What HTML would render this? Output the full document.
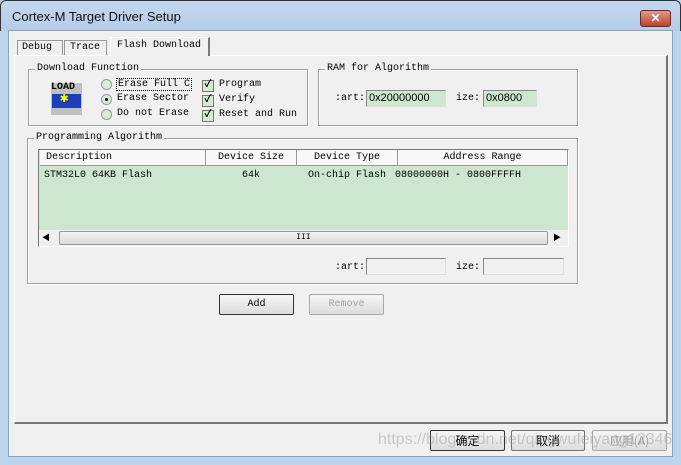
<!DOCTYPE html><html><head><meta charset="utf-8"><style>
*{margin:0;padding:0;box-sizing:border-box}
body{width:681px;height:465px;background:#bcd5ec;position:relative;overflow:hidden;font-family:"Liberation Mono","Noto Sans CJK SC",monospace;font-size:10px;color:#000}
.a{position:absolute}
.title{left:0;top:0;width:681px;height:31px;background:linear-gradient(#c4d8ee,#b4cde8);border:1px solid #333;border-bottom:none;border-radius:6px 6px 0 0}
.client{left:8px;top:30px;width:665px;height:427px;background:#f0f0f0;border:1px solid #8aa3bf}
.grp{position:absolute;border:1px solid #a0a0a0;box-shadow:1px 1px 0 #fff inset,1px 1px 0 #fff}
.grp .t{position:absolute;top:-7px;left:6px;background:#f0f0f0;padding:0 2px;line-height:12px}
.in{position:absolute;height:17px;border:1px solid #888;border-right-color:#ddd;border-bottom-color:#ddd;padding-left:2px;line-height:14px;font-family:"Liberation Sans",sans-serif;font-size:11px}
.btn{position:absolute;height:21px;border:1px solid #707070;background:linear-gradient(#f6f6f6,#dcdcdc);text-align:center;line-height:19px;border-radius:2px}
.rad{position:absolute;width:11px;height:11px;border-radius:50%;border:1px solid #999;background:#d9ecd9}
.chk{position:absolute;width:12px;height:12px;border:1px solid #777;background:#d4ead4;font-size:10px;line-height:10px;text-align:center;font-weight:bold}
.th{position:absolute;top:0;height:16px;border-right:1px solid #999;border-bottom:1px solid #999;background:#f8f8f8;line-height:15px}
</style></head><body>
<div class="a title"></div>
<div class="a" style="left:12px;top:9px;font:13px 'Liberation Sans',sans-serif;color:#111">Cortex-M Target Driver Setup</div>
<div class="a" style="left:640px;top:10px;width:31px;height:17px;background:linear-gradient(#e09a8a,#c0412c);border:1px solid #6b2a20;border-radius:3px;color:#fff;font:bold 12px 'Liberation Sans';text-align:center;line-height:15px">✕</div>
<div class="a client"></div>
<!-- tabs -->
<div class="a" style="left:17px;top:40px;width:46px;height:16px;border:1px solid #999;border-bottom:none;background:#f0f0f0;line-height:14px;padding-left:4px">Debug</div>
<div class="a" style="left:64px;top:40px;width:43px;height:16px;border:1px solid #999;border-bottom:none;background:#f0f0f0;line-height:14px;padding-left:5px">Trace</div>
<div class="a" style="left:14px;top:55px;width:654px;height:369px;border:1px solid #fff;border-right:2px solid #777;border-bottom:2px solid #777;box-shadow:0 0 0 0 #fff"></div>
<div class="a" style="left:110px;top:37px;width:100px;height:19px;border:1px solid #fff;border-right:2px solid #777;border-bottom:none;background:#f0f0f0;line-height:15px;padding-left:6px">Flash Download</div>
<!-- Download function -->
<div class="grp" style="left:28px;top:69px;width:280px;height:57px"><span class="t">Download Function</span></div>
<div class="a" style="left:51px;top:83px;width:31px;height:32px;background:#c0c0c0"></div>
<div class="a" style="left:51px;top:82px;font:bold 10px 'Liberation Mono';letter-spacing:0">LOAD</div>
<div class="a" style="left:52px;top:94px;width:29px;height:14px;background:#1d3fb5"></div>
<div class="a" style="left:60px;top:92px;color:#ff0;font-size:14px;line-height:14px">✱</div>
<div class="rad" style="left:101px;top:79px"></div>
<div class="rad" style="left:101px;top:94px"><div style="width:3px;height:3px;background:#000;border-radius:50%;margin:3px"></div></div>
<div class="rad" style="left:101px;top:109px"></div>
<div class="a" style="left:116px;top:78px;border:1px dotted #000;padding:0 1px;line-height:11px">Erase Full C</div>
<div class="a" style="left:117px;top:93px">Erase Sector</div>
<div class="a" style="left:117px;top:108px">Do not Erase</div>
<div class="chk" style="left:202px;top:80px">✓</div>
<div class="chk" style="left:202px;top:95px">✓</div>
<div class="chk" style="left:202px;top:110px">✓</div>
<div class="a" style="left:219px;top:79px">Program</div>
<div class="a" style="left:219px;top:94px">Verify</div>
<div class="a" style="left:219px;top:109px">Reset and Run</div>
<!-- RAM -->
<div class="grp" style="left:318px;top:69px;width:260px;height:57px"><span class="t">RAM for Algorithm</span></div>
<div class="a" style="left:335px;top:93px">:art:</div>
<div class="in" style="left:366px;top:90px;width:80px;background:#cde8cf">0x20000000</div>
<div class="a" style="left:456px;top:93px">ize:</div>
<div class="in" style="left:483px;top:90px;width:54px;background:#cde8cf">0x0800</div>
<!-- Programming algorithm -->
<div class="grp" style="left:27px;top:138px;width:551px;height:146px"><span class="t">Programming Algorithm</span></div>
<div class="a" style="left:38px;top:149px;width:531px;height:98px;border:1px solid #777;border-right-color:#fff;border-bottom-color:#fff;background:#cce6cf;overflow:hidden">
<div class="th" style="left:1px;width:166px;padding-left:6px">Description</div>
<div class="th" style="left:167px;width:91px;text-align:center">Device Size</div>
<div class="th" style="left:258px;width:101px;text-align:center">Device Type</div>
<div class="th" style="left:359px;width:170px;text-align:center">Address Range</div>
<div class="a" style="left:5px;top:20px">STM32L0 64KB Flash</div>
<div class="a" style="left:203px;top:20px">64k</div>
<div class="a" style="left:269px;top:20px">On-chip Flash</div>
<div class="a" style="left:356px;top:20px">08000000H - 0800FFFFH</div>
<div class="a" style="left:0;top:80px;width:531px;height:17px;background:#efefef"></div>
<div class="a" style="left:3px;top:82px;font-size:8px">◀</div>
<div class="a" style="left:20px;top:81px;width:489px;height:14px;border:1px solid #999;border-radius:2px;background:linear-gradient(#f4f4f4,#dadada);text-align:center;font-size:8px;line-height:12px">III</div>
<div class="a" style="left:514px;top:82px;font-size:8px">▶</div>
</div>
<div class="a" style="left:335px;top:262px">:art:</div>
<div class="in" style="left:366px;top:258px;width:80px"></div>
<div class="a" style="left:456px;top:262px">ize:</div>
<div class="in" style="left:483px;top:258px;width:81px"></div>
<div class="btn" style="left:219px;top:294px;width:75px;border-color:#333">Add</div>
<div class="btn" style="left:309px;top:294px;width:75px;color:#a0a0a0;border-color:#aaa">Remove</div>
<!-- bottom -->
<div class="btn" style="left:430px;top:430px;width:75px;font-family:'Noto Sans CJK SC',sans-serif;font-size:12px;border-color:#333">确定</div>
<div class="btn" style="left:511px;top:430px;width:74px;font-family:'Noto Sans CJK SC',sans-serif;font-size:12px">取消</div>
<div class="btn" style="left:592px;top:430px;width:75px;font-family:'Noto Sans CJK SC',sans-serif;font-size:12px;color:#a0a0a0;border-color:#aaa">应用(A)</div>
<div class="a" style="left:378px;top:431px;font:16px 'Liberation Sans',sans-serif;color:rgba(150,150,150,0.45)">https://blog.csdn.net/qingwufeiyang12346</div>
</body></html>
